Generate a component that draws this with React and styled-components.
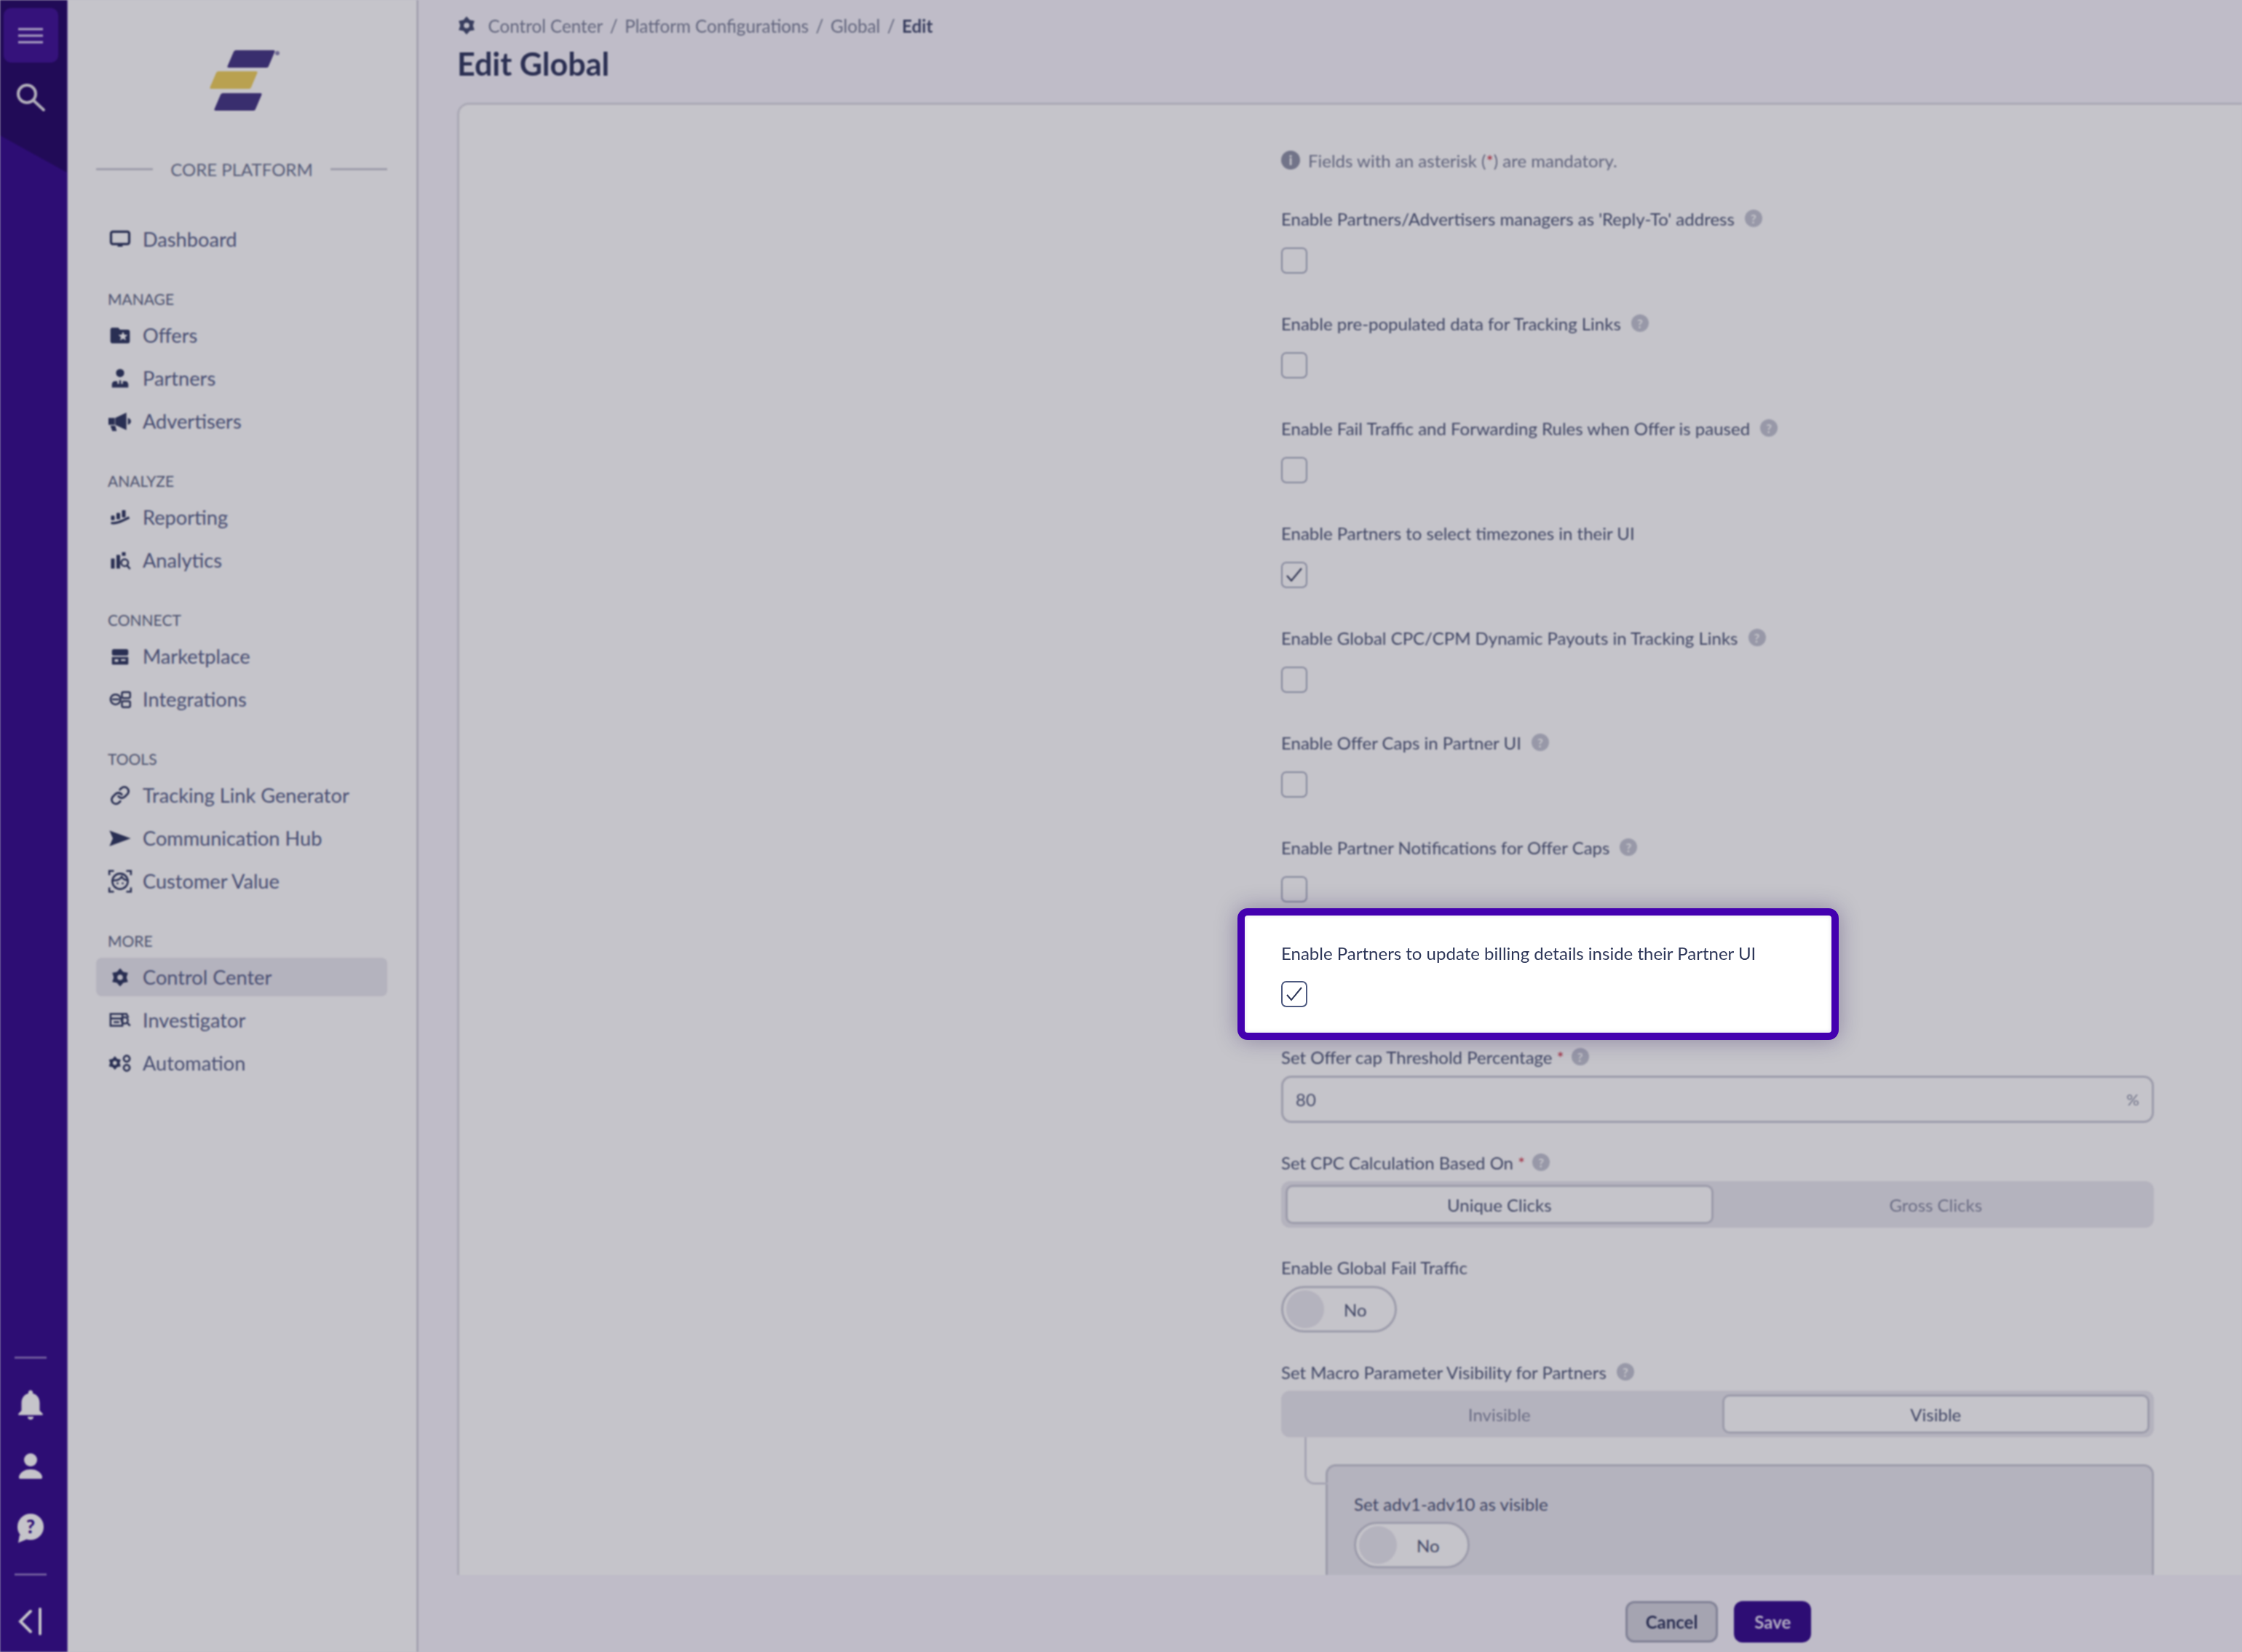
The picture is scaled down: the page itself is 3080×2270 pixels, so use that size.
import React from 'react';
import styled, { createGlobalStyle } from 'styled-components';
import { Link as LinkIcon } from 'lucide-react';
import { MdFolderSpecial, MdNotifications } from 'react-icons/md';

const GlobalStyle = createGlobalStyle`
  html, body, #root {
    margin: 0;
    height: 100%;
  }

  body {
    font-family: Lato, 'Open Sans', sans-serif;
    color: #31385f;
    background: #f7f5fc;
  }

  * {
    box-sizing: border-box;
  }
`;

const Stage = styled.div`
  position: relative;
  width: 100vw;
  height: 100vh;
  overflow: hidden;
`;

const Page = styled.div`
  display: flex;
  width: 100%;
  height: 100%;
  filter: blur(1.3px);
`;

const Scrim = styled.div`
  position: absolute;
  inset: 0;
  background: rgba(24, 20, 44, 0.25);
`;

const Rail = styled.aside`
  position: relative;
  flex: 0 0 93px;
  display: flex;
  flex-direction: column;
  align-items: center;
  padding-right: 8px;
  background: #340b8d;
  border-right: 1px solid #7a62b5;

  &::before {
    content: '';
    position: absolute;
    inset: 0 0 auto 0;
    height: 237px;
    background: #250866;
    clip-path: polygon(0 0, 100% 0, 100% 100%, 0 78.5%);
  }
`;

const RailTop = styled.div`
  position: relative;
  display: flex;
  flex-direction: column;
  align-items: center;
  width: 100%;
  padding-top: 11px;
`;

const MenuButton = styled.div`
  display: flex;
  align-items: center;
  justify-content: center;
  width: 75px;
  height: 75px;
  border-radius: 10px;
  background: #3f1296;
  color: #ddd0f5;
`;

const SearchButton = styled.div`
  display: flex;
  margin-top: 28px;
  color: #e4e2ea;
`;

const RailBottom = styled.div`
  display: flex;
  flex-direction: column;
  align-items: center;
  margin-top: auto;
  color: #fff;
`;

const RailRule = styled.div`
  width: 44px;
  height: 3px;
  margin: 20px 0;
  background: #8a70c0;
`;

const RailIcon = styled.div`
  display: flex;
  align-items: center;
  justify-content: center;
  height: 85px;
  width: 50px;
`;

const Sidebar = styled.nav`
  flex: 0 0 482px;
  padding: 69px 40px 0 39px;
  background: #fff;
  border-right: 3px solid #d5d3de;
`;

const Logo = styled.svg`
  display: block;
  width: 97px;
  height: 83px;
  margin: 0 0 65px 156px;
`;

const Brand = styled.div`
  display: flex;
  align-items: center;
  gap: 24px;
  height: 30px;
  margin-bottom: 55px;
  color: #6f7794;
  font-size: 24px;
  white-space: nowrap;

  &::before,
  &::after {
    content: '';
    flex: 1;
    height: 3px;
    background: #ccccd6;
  }
`;

const NavGroup = styled.div`
  display: flex;
  flex-direction: column;
  gap: 6px;
  margin-bottom: 44px;
`;

const NavHeading = styled.div`
  height: 24px;
  margin: 0 0 5px 16px;
  color: #5f6886;
  font-size: 21px;
  line-height: 24px;
`;

const NavItem = styled.a`
  display: flex;
  align-items: center;
  gap: 14px;
  height: 53px;
  padding-left: 16px;
  border-radius: 8px;
  background: ${({ $active }) => ($active ? '#e9e8ef' : 'transparent')};
  color: #59628a;
  font-size: 27.2px;
`;

const NavIcon = styled.span`
  display: flex;
  align-items: center;
  justify-content: center;
  flex: 0 0 34px;
  width: 34px;
  color: #2f3860;
`;

const Main = styled.main`
  flex: 1;
  min-width: 0;
  display: flex;
  flex-direction: column;
  padding-left: 53px;
  overflow: hidden;
`;

const Crumbs = styled.div`
  display: flex;
  align-items: center;
  gap: 9.5px;
  height: 30px;
  margin-top: 20px;
  color: #7b8099;
  font-size: 24.2px;
`;

const CrumbIcon = styled.span`
  display: flex;
  margin-right: 7px;
  color: #444c70;
`;

const CrumbLast = styled.span`
  color: #444c70;
  font-weight: 700;
`;

const Title = styled.h1`
  height: 50px;
  margin: 13px 0 28px;
  color: #31385f;
  font-size: 43px;
  font-weight: 700;
  line-height: 50px;
`;

const Panel = styled.section`
  flex: 1;
  min-height: 0;
  margin-right: -40px;
  background: #fff;
  border: 3px solid #dcdbe4;
  border-bottom: 0;
  border-radius: 16px 16px 0 0;
  overflow: hidden;
`;

const Form = styled.div`
  display: flex;
  flex-direction: column;
  gap: 39px;
  width: 1199px;
  margin-left: 1129px;
  padding-top: 61px;
`;

const Note = styled.div`
  display: flex;
  align-items: center;
  gap: 11px;
  height: 30px;
  margin-bottom: 11px;
  color: #7b8099;
  font-size: 24px;
`;

const NoteIcon = styled.span`
  display: flex;
  align-items: center;
  justify-content: center;
  width: 26px;
  height: 26px;
  border-radius: 50%;
  background: #9094a8;
  color: #fff;
  font-size: 18px;
  font-weight: 900;
`;

const Required = styled.span`
  color: #d03a4c;
  margin-right: -4px;
`;

const NoteMark = styled.span`
  color: #d03a4c;
`;

const Field = styled.div`
  display: flex;
  flex-direction: column;
  gap: 11px;
`;

const FieldSlot = styled.div`
  height: 105px;
`;

const Label = styled.label`
  display: flex;
  align-items: center;
  gap: 6px;
  height: 30px;
  color: ${({ $strong }) => ($strong ? '#2d3658' : '#4e5778')};
  font-size: 24px;
  white-space: nowrap;
`;

const Help = styled.span`
  display: flex;
  align-items: center;
  justify-content: center;
  width: 24px;
  height: 24px;
  margin-left: 8px;
  border-radius: 50%;
  background: #c3c5d2;
  color: #fff;
  font-size: 17px;
  font-weight: 700;
`;

const CheckRow = styled.div`
  display: flex;
  align-items: center;
  height: 64px;
`;

const Checkbox = styled.span`
  display: flex;
  align-items: center;
  justify-content: center;
  width: 36px;
  height: 36px;
  border: 2.5px solid ${({ $strong }) => ($strong ? '#4e5a80' : '#a9aec2')};
  border-radius: 7px;
  background: #fff;
  color: #2d3658;
`;

const Input = styled.div`
  display: flex;
  align-items: center;
  justify-content: space-between;
  height: 65px;
  padding: 0 17px;
  border: 3px solid #c9cad6;
  border-radius: 14px;
  color: #5a6283;
  font-size: 24px;
`;

const Unit = styled.span`
  color: #8d92a8;
  font-size: 22px;
`;

const Segments = styled.div`
  display: grid;
  grid-template-columns: 1fr 1fr;
  gap: 12px;
  height: 64px;
  padding: 5px 6px;
  border-radius: 12px;
  background: #e9e8ef;
`;

const Segment = styled.div`
  display: flex;
  align-items: center;
  justify-content: center;
  border: ${({ $on }) => ($on ? '3px solid #c9cad6' : '0')};
  border-radius: 10px;
  background: ${({ $on }) => ($on ? '#fff' : 'transparent')};
  color: ${({ $on }) => ($on ? '#4e5778' : '#878ca3')};
  font-size: 24px;
`;

const Toggle = styled.div`
  display: flex;
  align-items: center;
  width: 159px;
  height: 64px;
  padding-left: 4px;
  border: 3px solid #c9cad6;
  border-radius: 32px;
  background: #fff;
  color: #4e5778;
  font-size: 24px;
`;

const Knob = styled.span`
  width: 52px;
  height: 52px;
  margin-right: 27px;
  border-radius: 50%;
  background: #e9e8ef;
`;

const SubPanel = styled.div`
  position: relative;
  display: flex;
  flex-direction: column;
  gap: 10px;
  margin: 26px 0 0 61px;
  height: 300px;
  padding: 36px 36px 0;
  border: 3px solid #c9cad6;
  border-bottom: 0;
  border-radius: 14px 14px 0 0;
  background: #e9e8ef;

  &::before {
    content: '';
    position: absolute;
    left: -32px;
    top: -40px;
    width: 29px;
    height: 62px;
    border-left: 3px solid #d8d8e2;
    border-bottom: 3px solid #d8d8e2;
    border-bottom-left-radius: 14px;
  }
`;

const Footer = styled.footer`
  flex: 0 0 106px;
  display: flex;
  justify-content: center;
  gap: 22px;
  width: 1199px;
  margin-left: 1133px;
  padding-top: 36px;
`;

const Button = styled.button`
  height: 57px;
  padding: 0 25px;
  border: 3px solid ${({ $primary }) => ($primary ? '#340b8d' : '#a5a7ba')};
  border-radius: 12px;
  background: ${({ $primary }) => ($primary ? '#340b8d' : '#d4d4de')};
  color: ${({ $primary }) => ($primary ? '#e6e0f5' : '#31385f')};
  font-family: inherit;
  font-size: 24px;
  font-weight: 700;
`;

const Spotlight = styled.div`
  position: absolute;
  left: 1700px;
  top: 1248px;
  display: flex;
  flex-direction: column;
  gap: 24px;
  width: 826px;
  height: 181px;
  padding: 36px 0 0 50px;
  border: 10px solid #4400b0;
  border-radius: 14px;
  background: #fff;
  box-shadow: 0 0 30px rgba(30, 10, 80, 0.35), inset 0 0 6px rgba(30, 10, 80, 0.12);
`;

const GEAR =
  'M12 .5 16 5.07 21.96 6.25 20 12 21.96 17.75 16 18.93 12 23.5 8 18.93 2.04 17.75 4 12 2.04 6.25 8 5.07ZM12 8.5a3.5 3.5 0 1 0 0 7 3.5 3.5 0 1 0 0-7Z';

const Gear = ({ size = 26 }) => (
  <svg width={size} height={size} viewBox="0 0 24 24" fill="currentColor">
    <path d={GEAR} fillRule="evenodd" />
  </svg>
);

const Glyph = ({ children, width = 30, height = 30, box = '0 0 24 24' }) => (
  <svg width={width} height={height} viewBox={box} fill="currentColor">
    {children}
  </svg>
);

const DesktopIcon = () => (
  <Glyph>
    <rect x="2" y="3.5" width="20" height="13.5" rx="2" fill="none" stroke="currentColor" strokeWidth="2.6" />
    <path d="M10 17h4l1 3H9z" />
  </Glyph>
);

const PartnerIcon = () => (
  <Glyph>
    <circle cx="12" cy="6" r="4.5" />
    <path d="M3 22v-3.5C3 16.500 4.500 15 6.500 15H9v3h2v-4h2v4h2v-3h2.500c2 0 3.500 1.500 3.500 3.500V22z" />
  </Glyph>
);

const HornIcon = () => (
  <Glyph width={32} height={32}>
    <path d="M0 8.500h6.500v7H0zM7 8.500 18.500 3v18L7 15.500zM20 8.500c2 .5 3.200 1.800 3.200 3.500s-1.200 3-3.200 3.500zM2 16.500h5l1.500 5.500H4z" />
  </Glyph>
);

const ReportIcon = () => (
  <Glyph>
    <rect x="2" y="10" width="4" height="5" rx="1" />
    <rect x="8" y="7" width="4" height="7" rx="1" />
    <rect x="14" y="4" width="4" height="8" rx="1" />
    <path d="M2 18c6 1 10-1 20-6" fill="none" stroke="currentColor" strokeWidth="2.6" />
  </Glyph>
);

const AnalyticsIcon = () => (
  <Glyph>
    <rect x="2" y="10" width="4" height="11" />
    <rect x="8" y="6" width="4" height="15" />
    <rect x="14" y="3" width="4" height="4" />
    <circle cx="17" cy="14.5" r="3.8" fill="none" stroke="currentColor" strokeWidth="2" />
    <path d="M19.5 17.5 23 21.5" stroke="currentColor" strokeWidth="2" />
  </Glyph>
);

const StoreIcon = () => (
  <Glyph>
    <rect x="3" y="4" width="18" height="7" rx="2" />
    <path
      fillRule="evenodd"
      d="M3 12.5h18V20a1 1 0 0 1-1 1H4a1 1 0 0 1-1-1zM6 15v3h4v-3zM13 15v2h5v-2z"
    />
  </Glyph>
);

const IntegrationIcon = () => (
  <Glyph width={32}>
    <g fill="none" stroke="currentColor" strokeWidth="2">
      <circle cx="7" cy="12" r="5.5" />
      <path d="M3 12h8" />
      <rect x="14" y="4" width="9" height="6.5" rx="1.5" />
      <rect x="14" y="14" width="9" height="6.5" rx="1.5" />
    </g>
  </Glyph>
);

const SendIcon = () => (
  <Glyph width={32} height={32}>
    <path d="M1 4l22 8-22 8 3.5-8z" />
  </Glyph>
);

const FaceIcon = () => (
  <Glyph width={36} height={36}>
    <g fill="none" stroke="currentColor" strokeWidth="1.8">
      <path d="M1.5 6V2h4.5M18 2h4.5v4M22.500 18v4H18M6 22H1.500v-4" />
      <circle cx="12" cy="12" r="7.500" />
      <path d="M5 11c4 .5 7-1 8.500-3.500 1 2 3 3.200 5.500 3.500" />
    </g>
    <circle cx="9.500" cy="14" r="1" />
    <circle cx="14.500" cy="14" r="1" />
  </Glyph>
);

const InvestigatorIcon = () => (
  <Glyph width={34}>
    <g fill="none" stroke="currentColor" strokeWidth="2">
      <rect x="1.500" y="5" width="13" height="13" />
      <path d="M1.500 10h13M5 14h6" />
      <circle cx="17" cy="12" r="3.500" />
      <path d="M19.500 14.500l3.500 3.500M14.500 5H19l2 4" />
    </g>
  </Glyph>
);

const AutomationIcon = () => (
  <Glyph width={36} height={32} box="0 0 30 24">
    <g transform="translate(0 3) scale(.72)">
      <path d={GEAR} fillRule="evenodd" />
    </g>
    <g fill="none" stroke="currentColor" strokeWidth="2.400">
      <circle cx="23" cy="6.500" r="3.600" />
      <circle cx="23" cy="17.500" r="3.600" />
    </g>
  </Glyph>
);

const NAV = [
  { items: [{ name: 'Dashboard', icon: <DesktopIcon /> }] },
  {
    title: 'MANAGE',
    items: [
      { name: 'Offers', icon: <MdFolderSpecial size={32} /> },
      { name: 'Partners', icon: <PartnerIcon /> },
      { name: 'Advertisers', icon: <HornIcon /> },
    ],
  },
  {
    title: 'ANALYZE',
    items: [
      { name: 'Reporting', icon: <ReportIcon /> },
      { name: 'Analytics', icon: <AnalyticsIcon /> },
    ],
  },
  {
    title: 'CONNECT',
    items: [
      { name: 'Marketplace', icon: <StoreIcon /> },
      { name: 'Integrations', icon: <IntegrationIcon /> },
    ],
  },
  {
    title: 'TOOLS',
    items: [
      { name: 'Tracking Link Generator', icon: <LinkIcon size={28} strokeWidth={2.4} /> },
      { name: 'Communication Hub', icon: <SendIcon /> },
      { name: 'Customer Value', icon: <FaceIcon /> },
    ],
  },
  {
    title: 'MORE',
    items: [
      { name: 'Control Center', icon: <Gear />, active: true },
      { name: 'Investigator', icon: <InvestigatorIcon /> },
      { name: 'Automation', icon: <AutomationIcon /> },
    ],
  },
];

const CHECKS_BEFORE = [
  { label: "Enable Partners/Advertisers managers as 'Reply-To' address", help: true },
  { label: 'Enable pre-populated data for Tracking Links', help: true },
  { label: 'Enable Fail Traffic and Forwarding Rules when Offer is paused', help: true },
  { label: 'Enable Partners to select timezones in their UI', checked: true },
  { label: 'Enable Global CPC/CPM Dynamic Payouts in Tracking Links', help: true },
  { label: 'Enable Offer Caps in Partner UI', help: true },
  { label: 'Enable Partner Notifications for Offer Caps', help: true },
];

const CheckMark = () => (
  <svg width="28" height="28" viewBox="0 0 28 28" fill="none" stroke="currentColor" strokeWidth="2">
    <path d="M4 15l6 7L24 5" />
  </svg>
);

const App = () => (
  <Stage>
    <GlobalStyle />
    <Page>
      <Rail>
        <RailTop>
          <MenuButton>
            <svg width="36" height="28" viewBox="0 0 36 28" stroke="currentColor" strokeWidth="3.200">
              <path d="M1 5h34M1 14h34M1 23h34" />
            </svg>
          </MenuButton>
          <SearchButton>
            <svg width="42" height="42" viewBox="0 0 42 42" fill="none" stroke="currentColor" strokeWidth="4">
              <circle cx="16" cy="15" r="12" />
              <path d="M25 24l14 13" strokeLinecap="round" />
            </svg>
          </SearchButton>
        </RailTop>
        <RailBottom>
          <RailRule />
          <RailIcon>
            <MdNotifications size={50} />
          </RailIcon>
          <RailIcon>
            <svg width="36" height="38" viewBox="0 0 36 38" fill="currentColor">
              <circle cx="18" cy="10" r="9" />
              <path d="M3 36a3 3 0 0 1-1-3c2-7 9-10 16-10s14 3 16 10a3 3 0 0 1-1 3z" />
            </svg>
          </RailIcon>
          <RailIcon>
            <svg width="40" height="42" viewBox="0 0 40 42" fill="currentColor">
              <circle cx="20" cy="19" r="18" />
              <path d="M5 30 3 41l12-5z" />
              <text x="20" y="28" fontFamily="Lato" fontSize="26" fontWeight="900" textAnchor="middle" fill="#340b8d">
                ?
              </text>
            </svg>
          </RailIcon>
          <RailRule />
          <RailIcon>
            <svg width="34" height="38" viewBox="0 0 34 38" fill="none" stroke="currentColor" strokeWidth="4" strokeLinecap="round">
              <path d="M17 5 3 19l14 14M30 2v34" />
            </svg>
          </RailIcon>
        </RailBottom>
      </Rail>

      <Sidebar>
        <Logo viewBox="0 0 97 83">
          <path d="M36 0h52c1 0 2 1 1.500 2L81 22c-.5 1-1.500 2-3 2H26c-1 0-2-1-1.500-2L33 2c.5-1 2-2 3-2z" fill="#453784" />
          <path d="M12 29h52c1 0 2 1 1.500 2L57 51c-.5 1-1.500 2-3 2H2c-1 0-2-1-1.500-2L9 31c.5-1 2-2 3-2z" fill="#efd05c" />
          <path d="M18 59h52c1 0 2 1 1.500 2L63 81c-.5 1-1.500 2-3 2H8c-1 0-2-1-1.500-2L15 61c.5-1 2-2 3-2z" fill="#453784" />
          <circle cx="93" cy="4" r="3" fill="#8f88b8" />
        </Logo>
        <Brand>CORE PLATFORM</Brand>
        {NAV.map((group) => (
          <NavGroup key={group.title || 'top'}>
            {group.title && <NavHeading>{group.title}</NavHeading>}
            {group.items.map((item) => (
              <NavItem key={item.name} $active={item.active}>
                <NavIcon>{item.icon}</NavIcon>
                {item.name}
              </NavItem>
            ))}
          </NavGroup>
        ))}
      </Sidebar>

      <Main>
        <Crumbs>
          <CrumbIcon>
            <Gear />
          </CrumbIcon>
          <span>Control Center</span>
          <span>/</span>
          <span>Platform Configurations</span>
          <span>/</span>
          <span>Global</span>
          <span>/</span>
          <CrumbLast>Edit</CrumbLast>
        </Crumbs>
        <Title>Edit Global</Title>
        <Panel>
          <Form>
            <Note>
              <NoteIcon>i</NoteIcon>
              <span>
                Fields with an asterisk (<NoteMark>*</NoteMark>) are mandatory.
              </span>
            </Note>
            {CHECKS_BEFORE.map((row) => (
              <Field key={row.label}>
                <Label>
                  {row.label}
                  {row.help && <Help>?</Help>}
                </Label>
                <CheckRow>
                  <Checkbox>{row.checked && <CheckMark />}</Checkbox>
                </CheckRow>
              </Field>
            ))}
            <FieldSlot />
            <Field>
              <Label>
                Set Offer cap Threshold Percentage <Required>*</Required>
                <Help>?</Help>
              </Label>
              <Input>
                80
                <Unit>%</Unit>
              </Input>
            </Field>
            <Field>
              <Label>
                Set CPC Calculation Based On <Required>*</Required>
                <Help>?</Help>
              </Label>
              <Segments>
                <Segment $on>Unique Clicks</Segment>
                <Segment>Gross Clicks</Segment>
              </Segments>
            </Field>
            <Field>
              <Label>Enable Global Fail Traffic</Label>
              <Toggle>
                <Knob />
                No
              </Toggle>
            </Field>
            <Field>
              <Label>
                Set Macro Parameter Visibility for Partners
                <Help>?</Help>
              </Label>
              <Segments>
                <Segment>Invisible</Segment>
                <Segment $on>Visible</Segment>
              </Segments>
              <SubPanel>
                <Label>Set adv1-adv10 as visible</Label>
                <Toggle>
                  <Knob />
                  No
                </Toggle>
              </SubPanel>
            </Field>
          </Form>
        </Panel>
        <Footer>
          <Button>Cancel</Button>
          <Button $primary>Save</Button>
        </Footer>
      </Main>
    </Page>
    <Scrim />
    <Spotlight>
      <Label $strong>Enable Partners to update billing details inside their Partner UI</Label>
      <Checkbox $strong>
        <CheckMark />
      </Checkbox>
    </Spotlight>
  </Stage>
);

export default App;
